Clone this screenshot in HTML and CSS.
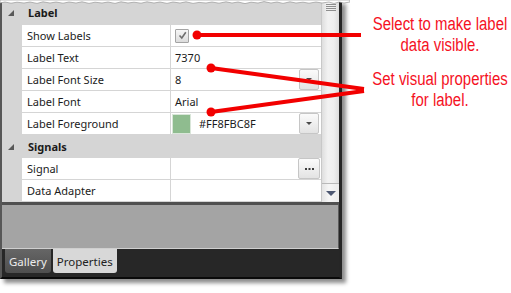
FILE: index.html
```html
<!DOCTYPE html>
<html lang="en">
<head>
    <meta charset="UTF-8">
    <title>Properties - Label</title>
    <link rel="stylesheet" href="styles.css">
</head>
<body>
    <div class="page">
        <div class="window">
            <div class="grid-area">
                <div class="props">
                    <div class="category first"><span class="expander"></span>Label</div>
                    <div class="row">
                        <div class="name">Show Labels</div>
                        <div class="value">
                            <span class="checkbox">
                                <svg width="11" height="11" viewBox="0 0 11 11"><polyline points="2.5,5.5 4.8,8 8.8,2.3" fill="none" stroke="#6e6e6e" stroke-width="1.6"/></svg>
                            </span>
                        </div>
                    </div>
                    <div class="row">
                        <div class="name">Label Text</div>
                        <div class="value">7370</div>
                    </div>
                    <div class="row">
                        <div class="name">Label Font Size</div>
                        <div class="value">8<span class="drop-btn"><span class="caret"></span></span></div>
                    </div>
                    <div class="row">
                        <div class="name">Label Font</div>
                        <div class="value">Arial</div>
                    </div>
                    <div class="row">
                        <div class="name">Label Foreground</div>
                        <div class="value color-value"><span class="swatch"></span><span class="hex">#FF8FBC8F</span><span class="drop-btn"><span class="caret"></span></span></div>
                    </div>
                    <div class="category"><span class="expander"></span>Signals</div>
                    <div class="row">
                        <div class="name">Signal</div>
                        <div class="value"><span class="drop-btn dots">
                            <svg width="9" height="2" viewBox="0 0 9 2"><rect x="0" y="0" width="2" height="2" fill="#3c3c3c"/><rect x="3.5" y="0" width="2" height="2" fill="#3c3c3c"/><rect x="7" y="0" width="2" height="2" fill="#3c3c3c"/></svg>
                        </span></div>
                    </div>
                    <div class="row">
                        <div class="name">Data Adapter</div>
                        <div class="value"></div>
                    </div>
                </div>
                <div class="scrollbar">
                    <div class="thumb"><span class="grip"></span></div>
                    <div class="arrow-down"><span class="arrow-tri"></span></div>
                </div>
            </div>
            <div class="blank"></div>
            <div class="tabbar">
                <span class="tab">Gallery</span>
                <span class="tab active">Properties</span>
            </div>
        </div>

        <div class="notes">
            <div class="note note-first">Select to make label<br>data visible.</div>
            <div class="note">Set visual properties<br>for label.</div>
        </div>

        <!-- torn top edge of the screenshot -->
        <svg class="torn-edge" width="350" height="6" viewBox="0 0 350 6">
            <polygon points="0,0 350,0 350,2 344,3 339,2 334,3.5 329,2 322,3 316,2 309,3.2 303,2.2 296,3 290,1.8 283,3.4 277,2 271,3 264,1.6 258,3 251,2.2 245,3.6 238,2 232,3 226,1.8 219,3.2 212,2 206,3 199,2.4 193,3.4 186,1.8 180,3 173,2 167,3.4 160,2 154,3 147,1.8 141,3.2 134,2.2 128,3 121,1.8 115,3.4 108,2 102,3 95,2.2 89,3.4 82,1.8 76,3 69,2 63,3.2 56,2 50,3 43,1.8 37,3.4 30,2 24,3 17,2.2 11,3.2 5,2 0,3" fill="#ffffff" stroke="#8a8a8a" stroke-width="0.6"/>
        </svg>

        <svg class="callouts" width="511" height="293" viewBox="0 0 511 293">
            <line x1="197" y1="35" x2="361" y2="35" stroke="#f20000" stroke-width="4"/>
            <circle cx="197" cy="35" r="4.5" fill="#f20000"/>
            <line x1="211" y1="68" x2="364" y2="89" stroke="#f20000" stroke-width="4"/>
            <circle cx="211" cy="68" r="4.5" fill="#f20000"/>
            <line x1="211" y1="112" x2="364" y2="91" stroke="#f20000" stroke-width="4"/>
            <circle cx="211" cy="112" r="4.5" fill="#f20000"/>
        </svg>
    </div>
</body>
</html>
```

FILE: styles.css
```css
body {
    margin: 0;
    background: #ffffff;
    font-family: 'Noto Sans', 'Open Sans', sans-serif;
    font-size: 11px;
    color: #1b1b1b;
}

.page {
    position: relative;
    display: flex;
    align-items: flex-start;
    width: 511px;
    height: 293px;
    overflow: hidden;
}

.window {
    width: 337px;
    flex-shrink: 0;
    display: flex;
    flex-direction: column;
    border-left: 2px solid #575757;
    border-right: 3px solid #262626;
    border-bottom: 2px solid #0a0a0a;
    box-shadow: 4px 4px 4px rgba(0, 0, 0, 0.45);
}

.grid-area {
    display: flex;
    height: 202px;
}

.props {
    flex: 1;
    background: #d5d5d5;
}

.category {
    height: 23px;
    display: flex;
    align-items: center;
    padding-left: 6px;
    font-weight: bold;
}
.category.first {
    height: 25px;
}

.expander {
    width: 0;
    height: 0;
    border-left: 6px solid transparent;
    border-bottom: 6px solid #595959;
    margin-right: 14px;
    margin-top: 1px;
}

.row {
    display: grid;
    grid-template-columns: 149px 1fr;
    height: 21px;
    margin-left: 20px;
    border-bottom: 1px solid #d5d5d5;
}

.name {
    background: #ffffff;
    border-right: 1px solid #d5d5d5;
    padding-left: 5px;
    display: flex;
    align-items: center;
}

.value {
    background: #ffffff;
    padding-left: 4px;
    display: flex;
    align-items: center;
}

.checkbox {
    width: 12px;
    height: 12px;
    border: 1px solid #a4a4a4;
    border-radius: 1px;
    background: linear-gradient(#f6f6f6, #dcdcdc);
    display: flex;
    align-items: center;
    justify-content: center;
}

.color-value {
    padding-left: 1px;
}
.swatch {
    width: 17px;
    height: 18px;
    background: #8fbc8f;
    border: 1px solid #d9e6d9;
}
.hex {
    margin-left: 8px;
}

.drop-btn {
    margin-left: auto;
    margin-right: 2px;
    width: 18px;
    height: 19px;
    border: 1px solid #c6c6c6;
    border-radius: 2px;
    background: linear-gradient(#fbfbfb, #e3e3e3);
    display: flex;
    align-items: center;
    justify-content: center;
}
.drop-btn.dots {
    width: 20px;
    margin-right: 1px;
}
.caret {
    width: 0;
    height: 0;
    border-left: 3px solid transparent;
    border-right: 3px solid transparent;
    border-top: 3px solid #4a4a4a;
}

.scrollbar {
    width: 17px;
    border-left: 1px solid #c8c8c8;
    display: flex;
    flex-direction: column;
    background: #e9e9e9;
}
.thumb {
    flex: 1;
    background: linear-gradient(to right, #dedede, #f2f2f2 35%, #eeeeee 70%, #dcdcdc);
    border-bottom: 1px solid #b9b9b9;
    display: flex;
    justify-content: center;
}
.grip {
    width: 10px;
    height: 7px;
    margin-top: 4px;
    background: repeating-linear-gradient(#8e8e8e 0, #8e8e8e 1px, transparent 1px, transparent 2px);
}
.arrow-down {
    height: 18px;
    background: linear-gradient(to right, #e4e4e4, #f6f6f6 40%, #ebebeb);
    display: flex;
    align-items: center;
    justify-content: center;
}
.arrow-tri {
    width: 0;
    height: 0;
    border-left: 5px solid transparent;
    border-right: 5px solid transparent;
    border-top: 5px solid #4c5771;
}

.blank {
    height: 47px;
    box-sizing: border-box;
    background: #a4a4a4;
    border-top: 3px solid #505050;
    border-right: 1px solid #5c5c5c;
    border-bottom: 1px solid #cfcfcf;
}

.tabbar {
    height: 28px;
    background: #272727;
    display: flex;
    align-items: flex-start;
    gap: 2px;
    padding-left: 3px;
}

.tab {
    height: 24px;
    padding: 0 4px;
    display: flex;
    align-items: center;
    font-size: 11.5px;
    color: #ececec;
    background: linear-gradient(#666666, #4e4e4e);
    border-radius: 0 0 3px 3px;
}
.tab.active {
    padding: 0 4px;
    color: #222222;
    background: #d8d8d8;
}

.notes {
    width: 170px;
    flex-shrink: 0;
    margin-left: 13px;
    padding-top: 14px;
    font-family: 'Liberation Sans', Arial, sans-serif;
    font-size: 18px;
    line-height: 21px;
    color: #f5121f;
    text-align: center;
    white-space: nowrap;
    transform: scaleX(0.83);
}
.note-first {
    margin-bottom: 13px;
}

.torn-edge {
    position: absolute;
    top: 0;
    left: 0;
}

.callouts {
    position: absolute;
    top: 0;
    left: 0;
    pointer-events: none;
}
```
